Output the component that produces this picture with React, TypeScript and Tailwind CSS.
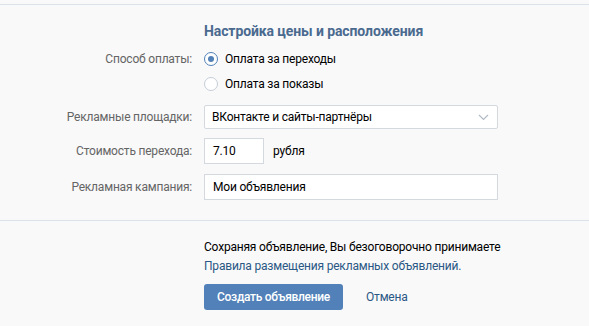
import React from "react";

function Radio({ checked }: { checked: boolean }) {
  return checked ? (
    <span className="flex h-[14px] w-[14px] items-center justify-center rounded-full border border-[#5181b8] bg-white">
      <span className="h-[6px] w-[6px] rounded-full bg-[#5181b8]" />
    </span>
  ) : (
    <span className="h-[14px] w-[14px] rounded-full border border-[#c5cdd6] bg-white" />
  );
}

function Row({ label, children, className = "" }: { label?: string; children: React.ReactNode; className?: string }) {
  return (
    <div className={"flex items-center " + className}>
      <div className="w-[192px] text-right text-[#656565]">{label}</div>
      <div className="ml-[12px] flex flex-1 items-center">{children}</div>
    </div>
  );
}

export default function App() {
  return (
    <div className="h-[326px] w-[589px] overflow-hidden bg-[#f9f9f9] font-['Roboto',sans-serif] text-[12px] tracking-[-0.2px]">
      <div className="h-[4px]" />
      <div className="border-t border-[#dbe2ea]">
        <div className="pt-[17px] pl-[204px] text-[14px] font-bold leading-[18px] tracking-[-0.1px] text-[#4a6a8f]">
          Настройка цены и расположения
        </div>
        <div className="mt-[6px]">
          <Row label="Способ оплаты:" className="h-[25px]">
            <Radio checked />
            <span className="ml-[7px] text-black">Оплата за переходы</span>
          </Row>
          <Row className="h-[25px]">
            <Radio checked={false} />
            <span className="ml-[7px] text-black">Оплата за показы</span>
          </Row>
        </div>
        <Row label="Рекламные площадки:" className="mt-[9px]">
          <div className="flex h-[24px] w-[294px] items-center justify-between rounded-[2px] border border-[#d3d9de] bg-white pl-[7px] pr-[8px] text-black">
            <span>ВКонтакте и сайты-партнёры</span>
            <svg width="11" height="7" viewBox="0 0 11 7" fill="none">
              <path d="M1 1l4.5 4.5L10 1" stroke="#b2bbc5" strokeWidth="1.2" />
            </svg>
          </div>
        </Row>
        <Row label="Стоимость перехода:" className="mt-[9px]">
          <div className="flex h-[26px] w-[60px] items-center border border-[#d3d9de] bg-white pl-[8px] text-black">7.10</div>
          <span className="ml-[9px] text-black">рубля</span>
        </Row>
        <Row label="Рекламная кампания:" className="mt-[10px]">
          <div className="flex h-[26px] w-[294px] items-center border border-[#d3d9de] bg-white pl-[8px] text-black">Мои объявления</div>
        </Row>
        <div className="mt-[20px] border-t border-[#dbe2ea]" />
        <div className="pl-[204px] pt-[17px]">
          <div className="leading-[19px] text-black">Сохраняя объявление, Вы безоговорочно принимаете</div>
          <div className="leading-[19px] text-[#2a5885]">Правила размещения рекламных объявлений.</div>
          <div className="mt-[8px] flex items-center">
            <button className="h-[26px] w-[139px] rounded-[3px] bg-[#5181b8] text-[12px] font-medium tracking-[-0.3px] text-white">
              Создать объявление
            </button>
            <span className="ml-[23px] text-[#2a5885]">Отмена</span>
          </div>
        </div>
      </div>
    </div>
  );
}
